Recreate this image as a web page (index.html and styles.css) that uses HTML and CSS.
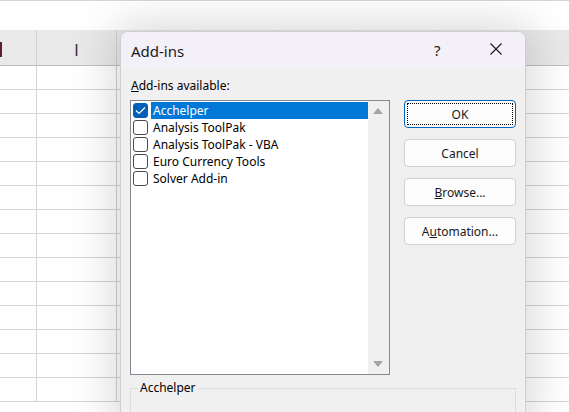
FILE: index.html
```html
<!DOCTYPE html>
<html>
<head>
<meta charset="utf-8">
<link rel="stylesheet" href="styles.css">
</head>
<body>
<div class="sheet">
  <div class="topband"></div>
  <div class="hdr">
    <div class="cell c0"></div>
    <div class="cell">I</div>
    <div class="cell"></div>
    <div class="cell"></div>
    <div class="cell"></div>
    <div class="cell"></div>
    <div class="cell">O</div>
  </div>
  <div class="rows">
    <div class="row"><div class="cell c0"></div><div class="cell"></div><div class="cell"></div><div class="cell"></div><div class="cell"></div><div class="cell"></div><div class="cell"></div></div>
    <div class="row"><div class="cell c0"></div><div class="cell"></div><div class="cell"></div><div class="cell"></div><div class="cell"></div><div class="cell"></div><div class="cell"></div></div>
    <div class="row"><div class="cell c0"></div><div class="cell"></div><div class="cell"></div><div class="cell"></div><div class="cell"></div><div class="cell"></div><div class="cell"></div></div>
    <div class="row"><div class="cell c0"></div><div class="cell"></div><div class="cell"></div><div class="cell"></div><div class="cell"></div><div class="cell"></div><div class="cell"></div></div>
    <div class="row"><div class="cell c0"></div><div class="cell"></div><div class="cell"></div><div class="cell"></div><div class="cell"></div><div class="cell"></div><div class="cell"></div></div>
    <div class="row"><div class="cell c0"></div><div class="cell"></div><div class="cell"></div><div class="cell"></div><div class="cell"></div><div class="cell"></div><div class="cell"></div></div>
    <div class="row"><div class="cell c0"></div><div class="cell"></div><div class="cell"></div><div class="cell"></div><div class="cell"></div><div class="cell"></div><div class="cell"></div></div>
    <div class="row"><div class="cell c0"></div><div class="cell"></div><div class="cell"></div><div class="cell"></div><div class="cell"></div><div class="cell"></div><div class="cell"></div></div>
    <div class="row"><div class="cell c0"></div><div class="cell"></div><div class="cell"></div><div class="cell"></div><div class="cell"></div><div class="cell"></div><div class="cell"></div></div>
    <div class="row"><div class="cell c0"></div><div class="cell"></div><div class="cell"></div><div class="cell"></div><div class="cell"></div><div class="cell"></div><div class="cell"></div></div>
    <div class="row"><div class="cell c0"></div><div class="cell"></div><div class="cell"></div><div class="cell"></div><div class="cell"></div><div class="cell"></div><div class="cell"></div></div>
    <div class="row"><div class="cell c0"></div><div class="cell"></div><div class="cell"></div><div class="cell"></div><div class="cell"></div><div class="cell"></div><div class="cell"></div></div>
    <div class="row"><div class="cell c0"></div><div class="cell"></div><div class="cell"></div><div class="cell"></div><div class="cell"></div><div class="cell"></div><div class="cell"></div></div>
    <div class="row"><div class="cell c0"></div><div class="cell"></div><div class="cell"></div><div class="cell"></div><div class="cell"></div><div class="cell"></div><div class="cell"></div></div>
  </div>
</div>

<div class="dialog">
  <div class="titlebar">
    <span class="title">Add-ins</span>
    <span class="help">?</span>
    <span class="close">
      <svg width="12" height="12" viewBox="0 0 12 12"><path d="M0.5 0.5 L11.5 11.5 M11.5 0.5 L0.5 11.5" stroke="#1a1a1a" stroke-width="1.1" fill="none"/></svg>
    </span>
  </div>
  <div class="dbody">
    <div class="label"><u>A</u>dd-ins available:</div>
    <div class="main">
      <div class="listbox">
        <div class="items">
          <div class="item sel">
            <span class="cb on"><svg width="11" height="9" viewBox="0 0 11 9"><path d="M1 4.5 L4 7.5 L10 1.5" stroke="#fff" stroke-width="1.2" fill="none"/></svg></span>
            <span class="txt">Acchelper</span>
          </div>
          <div class="item"><span class="cb"></span><span class="txt">Analysis ToolPak</span></div>
          <div class="item"><span class="cb"></span><span class="txt">Analysis ToolPak - VBA</span></div>
          <div class="item"><span class="cb"></span><span class="txt">Euro Currency Tools</span></div>
          <div class="item"><span class="cb"></span><span class="txt">Solver Add-in</span></div>
        </div>
        <div class="scroll">
          <span class="arrow up"></span>
          <span class="arrow down"></span>
        </div>
      </div>
      <div class="buttons">
        <div class="btn default"><span class="focus">OK</span></div>
        <div class="btn">Cancel</div>
        <div class="btn"><u>B</u>rowse...</div>
        <div class="btn">A<u>u</u>tomation...</div>
      </div>
    </div>
    <div class="group">
      <span class="glabel">Acchelper</span>
    </div>
  </div>
</div>
</body>
</html>
```

FILE: styles.css
```css
html, body {
  margin: 0;
  padding: 0;
  width: 569px;
  height: 412px;
  overflow: hidden;
  background: #ffffff;
  font-family: "Noto Sans", "Liberation Sans", sans-serif;
}

.sheet {
  width: 569px;
}

.topband {
  height: 29px;
  border-top: 1px solid #d6d6d6;
  background: #ffffff;
}

.hdr {
  display: flex;
  height: 35px;
  background: #e9e9e9;
  border-bottom: 1px solid #bfbfbf;
}

.hdr .cell {
  font-family: "Open Sans", "Liberation Sans", sans-serif;
  font-size: 16px;
  color: #222;
  display: flex;
  align-items: center;
  justify-content: center;
  padding-top: 4px;
  box-sizing: border-box;
}

.hdr .cell.c0 {
  border-left: 2px solid #3a2a4a;
  border-left-width: 0;
  background: linear-gradient(to right, #5a2030 0, #5a2030 2px, transparent 2px);
  background-size: 2px 15px;
  background-repeat: no-repeat;
  background-position: 0 12px;
}

.cell {
  flex: 0 0 80px;
  width: 80px;
  box-sizing: border-box;
  border-right: 1px solid #d2d2d2;
}

.cell.c0 {
  flex: 0 0 37px;
  width: 37px;
}

.row {
  display: flex;
  height: 24px;
  box-sizing: border-box;
  border-bottom: 1px solid #d4d4d4;
}

.dialog {
  position: absolute;
  left: 120px;
  top: 31px;
  width: 406px;
  height: 400px;
  box-sizing: border-box;
  border: 1px solid #cfcfcf;
  border-radius: 8px 8px 0 0;
  background: #f0f0f0;
  box-shadow: 0 0 45px 6px rgba(0, 0, 0, 0.16);
  overflow: hidden;
}

.titlebar {
  height: 37px;
  background: #f3f0f7;
  display: flex;
  align-items: center;
  position: relative;
}

.title {
  font-size: 15px;
  color: #1a1a1a;
  margin-left: 10px;
}

.help {
  position: absolute;
  left: 313px;
  top: 8px;
  font-size: 15px;
  color: #1a1a1a;
}

.close {
  position: absolute;
  left: 369px;
  top: 11px;
  width: 12px;
  height: 12px;
  display: flex;
}

.dbody {
  padding: 9px 9px 0 9px;
  font-size: 12px;
  color: #000;
}

.label {
  height: 16px;
  line-height: 16px;
  margin-left: 1px;
  margin-bottom: 6px;
}

.main {
  display: flex;
  gap: 14px;
}

.listbox {
  width: 260px;
  height: 275px;
  box-sizing: border-box;
  border: 1px solid #828790;
  background: #fff;
  display: flex;
}

.items {
  flex: 1;
  padding-top: 1px;
}

.item {
  height: 17px;
  display: flex;
  align-items: center;
  position: relative;
}

.cb {
  width: 15px;
  height: 15px;
  margin-left: 2px;
  border: 1px solid #4a4a4a;
  border-radius: 3px;
  background: #fff;
  box-sizing: border-box;
  display: flex;
  align-items: center;
  justify-content: center;
  flex: 0 0 auto;
}

.cb.on {
  background: #005fb8;
  border-color: #005fb8;
}

.txt {
  margin-left: 3px;
  height: 17px;
  line-height: 17px;
  padding-left: 2px;
  flex: 1;
}

.item.sel .txt {
  background: #0078d7;
  color: #fff;
}

.scroll {
  width: 21px;
  background: #f0f0f0;
  position: relative;
}

.arrow {
  position: absolute;
  left: 5px;
  width: 0;
  height: 0;
  border-left: 5px solid transparent;
  border-right: 5px solid transparent;
}

.arrow.up {
  top: 7px;
  border-bottom: 6px solid #a3a3a3;
}

.arrow.down {
  bottom: 7px;
  border-top: 6px solid #a3a3a3;
}

.buttons {
  display: flex;
  flex-direction: column;
  gap: 11px;
  width: 112px;
}

.btn {
  height: 28px;
  box-sizing: border-box;
  border: 1px solid #d0d0d0;
  border-radius: 4px;
  background: #fdfdfd;
  display: flex;
  align-items: center;
  justify-content: center;
  font-size: 12px;
  color: #1a1a1a;
}

.btn.default {
  border-color: #0067c0;
  padding: 2px;
}

.focus {
  flex: 1;
  align-self: stretch;
  border: 1px dotted #000;
  display: flex;
  align-items: center;
  justify-content: center;
}

.group {
  margin-top: 13px;
  width: 386px;
  height: 40px;
  box-sizing: border-box;
  border: 1px solid #dcdcdc;
  position: relative;
}

.glabel {
  position: absolute;
  left: 7px;
  top: -9px;
  background: #f0f0f0;
  padding: 0 2px;
  line-height: 16px;
}
```
